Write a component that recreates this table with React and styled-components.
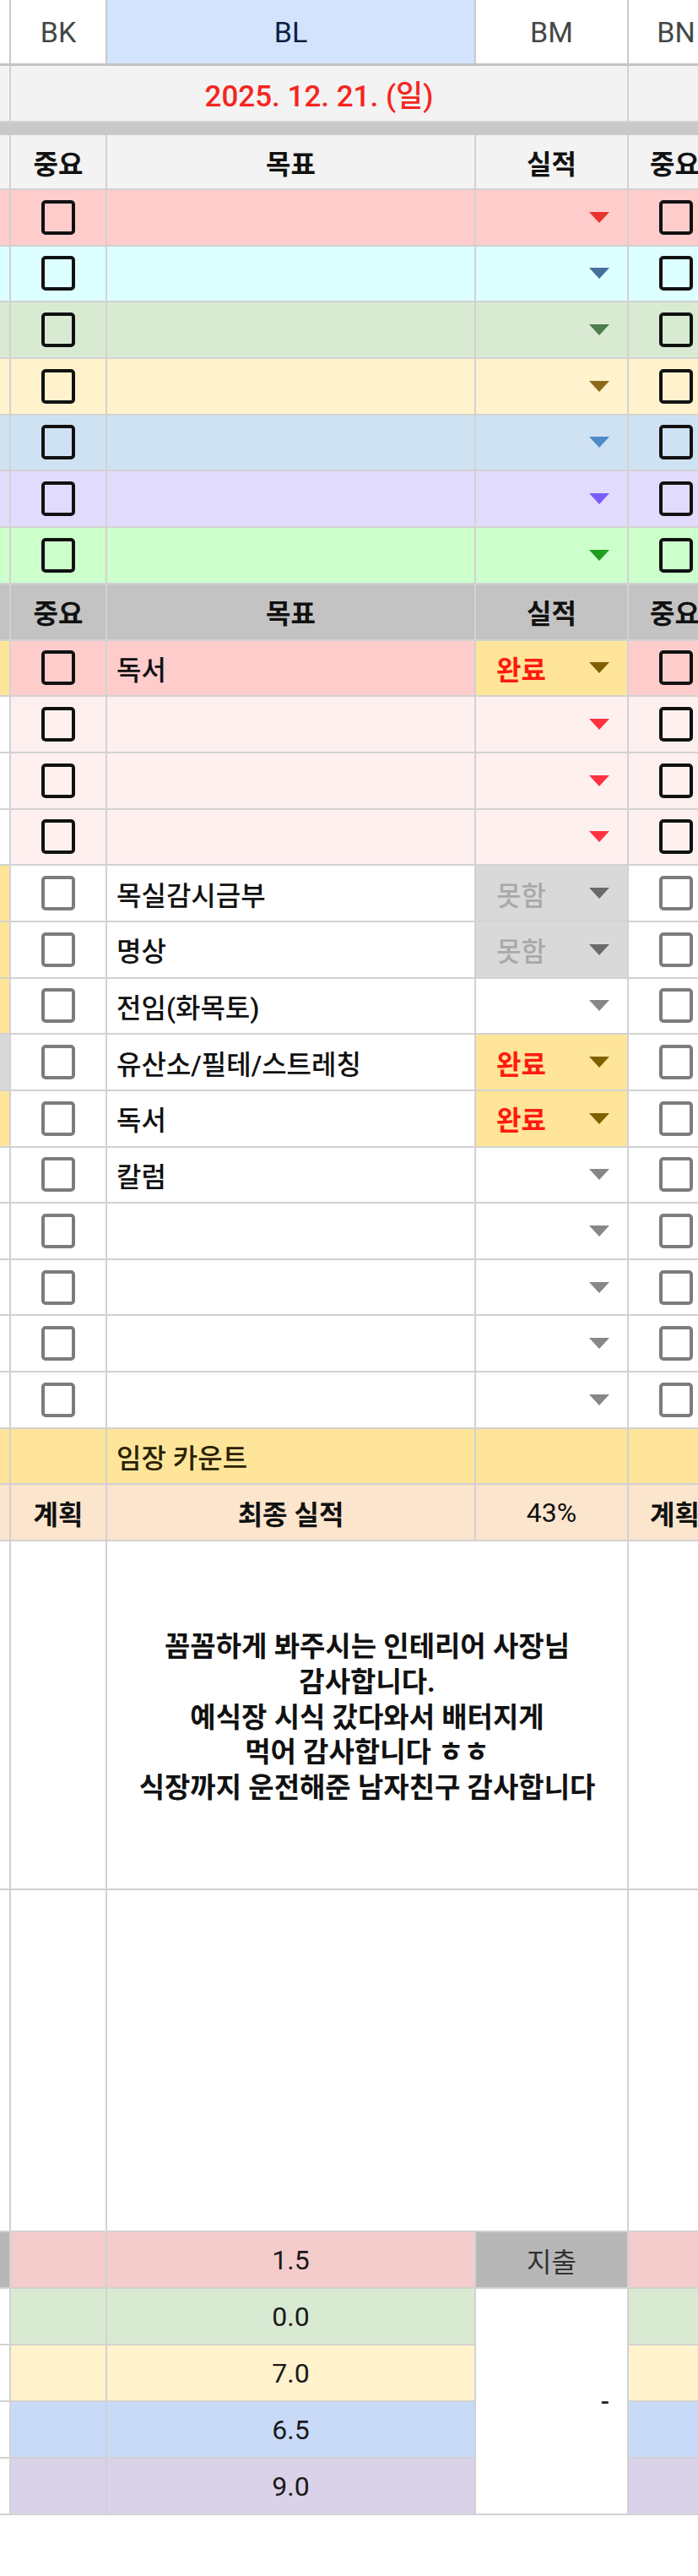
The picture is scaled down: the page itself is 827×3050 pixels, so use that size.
import React from 'react';
import styled, { createGlobalStyle } from 'styled-components';

const GlobalStyle = createGlobalStyle`
  html, body { margin: 0; padding: 0; background: #ffffff; }
  body {
    font-family: Roboto, "Noto Sans CJK KR", sans-serif;
    overflow-x: hidden;
  }
`;

const LINE = '#d2d2d2';
const COLS = '13px 114px 437px 181px 114px';

const Viewport = styled.div`
  width: 827px;
  overflow: hidden;
`;

const Sheet = styled.div`
  width: 859px;
  display: flex;
  flex-direction: column;
`;

const Grid = styled.div`
  display: grid;
  grid-template-columns: ${COLS};
  grid-template-rows: ${(p) => p.$rows};
`;

const Cell = styled.div`
  box-sizing: border-box;
  min-width: 0;
  overflow: hidden;
  background: ${(p) => p.$bg || '#ffffff'};
  border-right: 2px solid ${LINE};
  border-bottom: 2px solid ${LINE};
  grid-column: ${(p) => (p.$span ? `span ${p.$span}` : 'auto')};
  grid-row: ${(p) => (p.$rowSpan ? `span ${p.$rowSpan}` : 'auto')};
  display: flex;
  align-items: center;
  justify-content: ${(p) =>
    p.$align === 'left' ? 'flex-start' : p.$align === 'right' ? 'flex-end' : 'center'};
  padding: ${(p) => p.$pad || '0'};
  font-size: 32px;
  font-weight: ${(p) => (p.$bold ? 700 : p.$plain ? 400 : 500)};
  color: ${(p) => p.$color || '#111111'};
  white-space: nowrap;
`;

const ColHead = styled(Cell)`
  border-right: 2px solid #cacaca;
  border-bottom: 3px solid #c4c4c4;
  font-size: 34px;
  font-weight: 400;
  color: ${(p) => (p.$active ? '#0b1f44' : '#444746')};
  background: ${(p) => (p.$active ? '#d3e3fd' : '#ffffff')};
`;

const DateText = styled.span`
  font-size: 35px;
  font-weight: 500;
  color: #f42620;
`;

const Band = styled.div`
  grid-column: span 5;
  background: #c9c9c9;
`;

const Check = styled.span`
  box-sizing: border-box;
  width: 40px;
  height: 41px;
  border-radius: 5px;
  border: 4px solid ${(p) => (p.$light ? '#7c7c7c' : '#111111')};
`;

const StatusCell = styled(Cell)`
  justify-content: space-between;
  padding: 0 21px 0 24px;
`;

const StatusText = styled.span`
  font-size: 32px;
  font-weight: ${(p) => (p.$done ? 700 : 500)};
  color: ${(p) => (p.$done ? '#ff1a0f' : '#a9a9a9')};
`;

const Caret = styled.span`
  width: 0;
  height: 0;
  margin-left: auto;
  border-left: 12px solid transparent;
  border-right: 12px solid transparent;
  border-top: 13px solid ${(p) => p.$color};
`;

const Comment = styled.div`
  text-align: center;
  white-space: normal;
  font-size: 33px;
  font-weight: 700;
  line-height: 41.7px;
  color: #111111;
  margin-top: 6px;
`;

const Dash = styled.span`
  font-size: 30px;
  color: #222222;
`;

const topRows = [
  { bg: '#ffcccc', caret: '#ea3330' },
  { bg: '#ddffff', caret: '#44709a' },
  { bg: '#d9ead3', caret: '#4d7c4d' },
  { bg: '#fff2cc', caret: '#8c6a18' },
  { bg: '#cfe2f3', caret: '#4f8bc6' },
  { bg: '#e1dcfd', caret: '#7a5cf7' },
  { bg: '#ccffcc', caret: '#1f9d1f' },
];

const GREY_CARET = '#878787';
const goalRows = [
  { stub: '#ffe599', bg: '#ffcccc', text: '독서', status: '완료', sBg: '#ffe599', caret: '#7f6000', dark: true },
  { stub: '#ffffff', bg: '#fff0f0', caret: '#ff3340', dark: true },
  { stub: '#ffffff', bg: '#fff0f0', caret: '#ff3340', dark: true },
  { stub: '#ffffff', bg: '#fff0f0', caret: '#ff3340', dark: true },
  { stub: '#ffe599', text: '목실감시금부', status: '못함', sBg: '#d9d9d9', caret: '#6a6a6a' },
  { stub: '#ffe599', text: '명상', status: '못함', sBg: '#d9d9d9', caret: '#6a6a6a' },
  { stub: '#ffe599', text: '전임(화목토)', caret: GREY_CARET },
  { stub: '#d9d9d9', text: '유산소/필테/스트레칭', status: '완료', sBg: '#ffe599', caret: '#7f6000' },
  { stub: '#ffe599', text: '독서', status: '완료', sBg: '#ffe599', caret: '#7f6000' },
  { text: '칼럼', caret: GREY_CARET },
  { caret: GREY_CARET },
  { caret: GREY_CARET },
  { caret: GREY_CARET },
  { caret: GREY_CARET },
];

const totals = [
  { bg: '#f4cccc', value: '1.5' },
  { bg: '#d9ead3', value: '0.0' },
  { bg: '#fff2cc', value: '7.0' },
  { bg: '#c9daf8', value: '6.5' },
  { bg: '#d9d2e9', value: '9.0' },
];

const ROW = '66.67px';

export default function App() {
  return (
    <Viewport>
      <GlobalStyle />
      <Sheet>
        <Grid $rows="78px">
          <ColHead />
          <ColHead>BK</ColHead>
          <ColHead $active>BL</ColHead>
          <ColHead>BM</ColHead>
          <ColHead>BN</ColHead>
        </Grid>

        <Grid $rows={`67px 15px 65px repeat(7, ${ROW})`}>
          <Cell $bg="#f3f3f3" />
          <Cell $bg="#f3f3f3" $span={3}>
            <DateText>2025. 12. 21. (일)</DateText>
          </Cell>
          <Cell $bg="#f3f3f3" />
          <Band />

          <Cell $bg="#f3f3f3" />
          <Cell $bg="#f3f3f3" $bold>중요</Cell>
          <Cell $bg="#f3f3f3" $bold>목표</Cell>
          <Cell $bg="#f3f3f3" $bold>실적</Cell>
          <Cell $bg="#f3f3f3" $bold $align="left" $pad="0 0 0 25px">중요</Cell>

          {topRows.map((r, i) => (
            <React.Fragment key={i}>
              <Cell $bg={r.bg} />
              <Cell $bg={r.bg}><Check /></Cell>
              <Cell $bg={r.bg} />
              <StatusCell $bg={r.bg}><Caret $color={r.caret} /></StatusCell>
              <Cell $bg={r.bg}><Check /></Cell>
            </React.Fragment>
          ))}
        </Grid>

        <Grid $rows={`67px repeat(16, ${ROW})`}>
          <Cell $bg="#c3c3c3" />
          <Cell $bg="#c3c3c3" $bold>중요</Cell>
          <Cell $bg="#c3c3c3" $bold>목표</Cell>
          <Cell $bg="#c3c3c3" $bold>실적</Cell>
          <Cell $bg="#c3c3c3" $bold $align="left" $pad="0 0 0 25px">중요</Cell>

          {goalRows.map((r, i) => (
            <React.Fragment key={i}>
              <Cell $bg={r.stub} />
              <Cell $bg={r.bg}><Check $light={!r.dark} /></Cell>
              <Cell $bg={r.bg} $align="left" $pad="0 0 0 11px">{r.text}</Cell>
              <StatusCell $bg={r.sBg || r.bg}>
                {r.status && <StatusText $done={r.status === '완료'}>{r.status}</StatusText>}
                <Caret $color={r.caret} />
              </StatusCell>
              <Cell $bg={r.bg}><Check $light={!r.dark} /></Cell>
            </React.Fragment>
          ))}

          <Cell $bg="#ffe599" />
          <Cell $bg="#ffe599" />
          <Cell $bg="#ffe599" $align="left" $pad="0 0 0 11px" $color="#2a2205">임장 카운트</Cell>
          <Cell $bg="#ffe599" />
          <Cell $bg="#ffe599" />

          <Cell $bg="#fce5cd" />
          <Cell $bg="#fce5cd" $bold>계획</Cell>
          <Cell $bg="#fce5cd" $bold>최종 실적</Cell>
          <Cell $bg="#fce5cd" $plain>43%</Cell>
          <Cell $bg="#fce5cd" $bold $align="left" $pad="0 0 0 25px">계획</Cell>
        </Grid>

        <Grid $rows="413px 405px">
          <Cell />
          <Cell />
          <Cell $span={2}>
            <Comment>
              꼼꼼하게 봐주시는 인테리어 사장님
              <br />
              감사합니다.
              <br />
              예식장 시식 갔다와서 배터지게
              <br />
              먹어 감사합니다 ㅎㅎ
              <br />
              식장까지 운전해준 남자친구 감사합니다
            </Comment>
          </Cell>
          <Cell />
          <Cell />
          <Cell />
          <Cell $span={2} />
          <Cell />
        </Grid>

        <Grid $rows="repeat(5, 67px)">
          {totals.map((t, i) => (
            <React.Fragment key={i}>
              <Cell $bg={i === 0 ? '#b7b7b7' : '#ffffff'} />
              <Cell $bg={t.bg} />
              <Cell $bg={t.bg} $plain $color="#1a1a1a">{t.value}</Cell>
              {i === 0 && <Cell $bg="#b7b7b7" $plain $color="#333333">지출</Cell>}
              {i === 1 && (
                <Cell $rowSpan={4} $align="right" $pad="0 21px 0 0">
                  <Dash>-</Dash>
                </Cell>
              )}
              <Cell $bg={t.bg} />
            </React.Fragment>
          ))}
        </Grid>
      </Sheet>
    </Viewport>
  );
}
